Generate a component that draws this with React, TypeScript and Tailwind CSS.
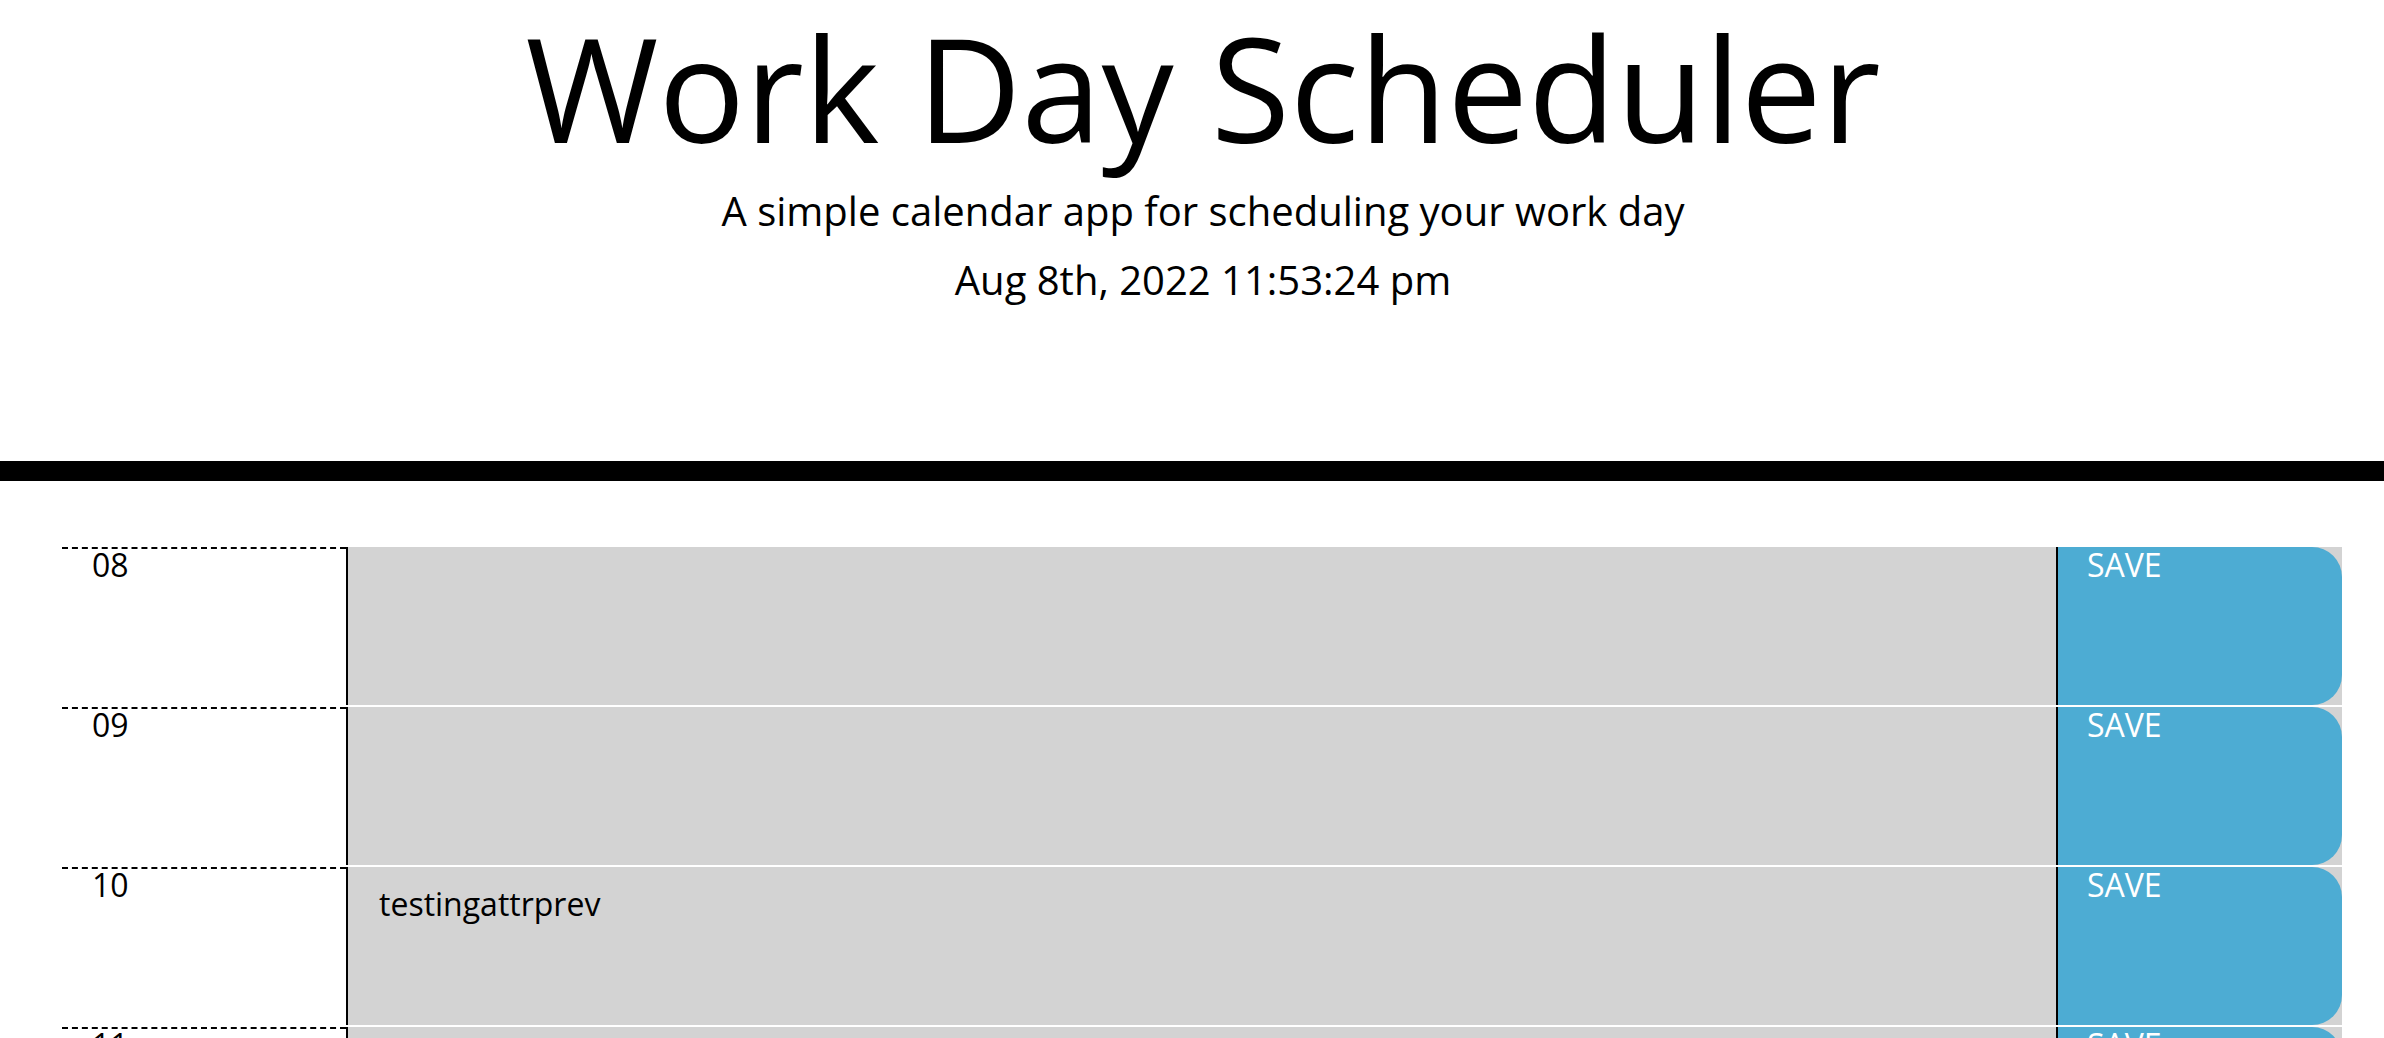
const hours = ["08", "09", "10", "11", "12", "13", "14", "15", "16", "17"];

const notes: Record<string, string> = {
  "10": "testingattrprev",
};

function TimeBlock({ hour }: { hour: string }) {
  return (
    <div className="flex h-[160px]">
      {/* Hour label */}
      <div className="w-[284px] shrink-0 border-t-2 border-dashed border-black bg-white px-[30px] text-[32px] leading-none text-black">
        {hour}
      </div>

      {/* Description + save, gray row behind the rounded button */}
      <div className="flex flex-1 border-b-2 border-white bg-[#d3d3d3]">
        <textarea
          defaultValue={notes[hour] ?? ""}
          className="h-full w-[1712px] shrink-0 resize-none border-x-2 border-black bg-[#d3d3d3] px-[31px] pt-[21px] text-[32px] leading-none text-black outline-none"
        />
        <button className="flex flex-1 cursor-pointer items-start rounded-r-[30px] bg-[#4dacd3] px-[29px] pt-[2px] text-left text-[32px] leading-none text-white">
          SAVE
        </button>
      </div>
    </div>
  );
}

export default function App() {
  return (
    <div className="min-h-screen bg-white font-['Open_Sans',sans-serif] text-black">
      {/* Header */}
      <header className="border-b-[20px] border-black pb-[161px] pl-[22px] pt-[15px] text-center">
        <h1 className="text-[144px] font-normal leading-none">Work Day Scheduler</h1>
        <p className="mt-[32px] text-[40px] font-normal leading-none">
          A simple calendar app for scheduling your work day
        </p>
        <p className="mt-[29px] text-[40px] font-normal leading-none">Aug 8th, 2022 11:53:24 pm</p>
      </header>

      {/* Time blocks */}
      <div className="ml-[62px] mt-[66px] w-[2280px]">
        {hours.map((h) => (
          <TimeBlock key={h} hour={h} />
        ))}
      </div>
    </div>
  );
}
